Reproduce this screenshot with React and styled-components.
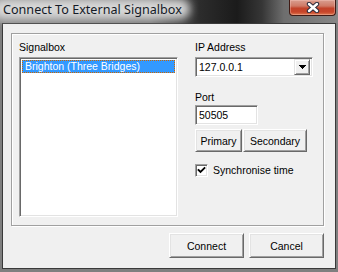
import styled, { createGlobalStyle } from "styled-components";

const GlobalStyle = createGlobalStyle`
  html, body {
    margin: 0;
    padding: 0;
    background: #7f7f7f;
  }
  * {
    box-sizing: border-box;
  }
`;

const Window = styled.div`
  width: 338px;
  height: 272px;
  display: flex;
  flex-direction: column;
  background: #7f7f7f;
  font-family: "Liberation Sans", Arial, sans-serif;
  font-size: 10.5px;
  color: #000;
`;

const TitleBar = styled.div`
  height: 23px;
  display: flex;
  align-items: flex-start;
  position: relative;
  z-index: 0;
  background: linear-gradient(
    90deg,
    #8c8c8c 0,
    #7a7a7a 150px,
    #2c2c2c 200px,
    #1b1b1b 237px,
    #363636 262px,
    #6e6e6e 284px,
    #878787 338px
  );
`;

const TitleText = styled.span`
  position: relative;
  margin: 1px 0 0 3px;
  font-family: "Noto Sans", "Open Sans", sans-serif;
  font-size: 12.6px;
  line-height: 17px;
  color: #141a26;
  white-space: nowrap;

  &::before {
    content: "";
    position: absolute;
    inset: -2px -8px -1px -10px;
    background: rgba(222, 222, 222, 0.92);
    border-radius: 9px;
    filter: blur(4px);
    z-index: -1;
  }
`;

const CloseButton = styled.div`
  margin-left: auto;
  margin-right: 2px;
  width: 47px;
  height: 16px;
  border: 1px solid #3f1a14;
  border-top: none;
  border-radius: 0 0 4px 4px;
  display: flex;
  align-items: center;
  justify-content: center;
  background: linear-gradient(
    180deg,
    #d99e90 0%,
    #cf7a66 40%,
    #c2432a 55%,
    #c8452a 80%,
    #de7b52 100%
  );
  box-shadow: inset 0 0 0 1px rgba(255, 210, 200, 0.35);
`;

const ClientWrap = styled.div`
  flex: 1;
  display: flex;
  padding: 0 2px 3px 2px;
`;

const Client = styled.div`
  flex: 1;
  border: 1px solid #3a3a3a;
  background: #f0f0f0;
  display: flex;
  flex-direction: column;
  padding: 9px 11px 10px 8px;
`;

const GroupBox = styled.div`
  height: 193px;
  border: 1px solid #a0a0a0;
  box-shadow: inset 1px 1px #fff, 1px 1px #fff;
  display: grid;
  grid-template-columns: 159px 118px;
  column-gap: 17px;
  padding: 7px 9px 8px 7px;
`;

const Column = styled.div`
  display: flex;
  flex-direction: column;
  align-items: flex-start;
`;

const Label = styled.div`
  line-height: 13px;
  height: 13px;
  margin-top: ${(p) => p.$top || 0}px;
  margin-bottom: ${(p) => p.$bottom || 0}px;
  white-space: nowrap;
`;

const Sunken = styled.div`
  border: 1px solid;
  border-color: #a0a0a0 #fff #fff #a0a0a0;
  box-shadow: inset 1px 1px #696969, inset -1px -1px #e3e3e3;
  background: #fff;
`;

const ListBox = styled(Sunken)`
  width: 159px;
  height: 160px;
  padding: 2px;
`;

const ListItem = styled.div`
  height: 13px;
  line-height: 13px;
  padding-left: 3px;
  background: ${(p) => (p.$selected ? "#3399ff" : "transparent")};
  color: ${(p) => (p.$selected ? "#fff" : "#000")};
  outline: ${(p) => (p.$selected ? "1px dotted #cc6600" : "none")};
  outline-offset: -1px;
  white-space: nowrap;
`;

const Combo = styled(Sunken)`
  width: 118px;
  height: 20px;
  display: flex;
  align-items: center;
  padding: 2px 2px 2px 3px;
`;

const ComboValue = styled.span`
  flex: 1;
  line-height: 16px;
`;

const DropButton = styled.div`
  width: 16px;
  height: 16px;
  background: #f0f0f0;
  border: 1px solid;
  border-color: #e3e3e3 #696969 #696969 #e3e3e3;
  box-shadow: inset 1px 1px #fff, inset -1px -1px #a0a0a0;
  display: flex;
  align-items: center;
  justify-content: center;
`;

const TextInput = styled(Sunken)`
  width: 63px;
  height: 20px;
  margin-top: 1px;
  padding: 2px 3px;
  line-height: 15px;
`;

const ButtonRow = styled.div`
  display: flex;
  gap: ${(p) => p.$gap || 0}px;
  margin-top: ${(p) => p.$top || 0}px;
  justify-content: ${(p) => p.$justify || "flex-start"};
`;

const Button = styled.div`
  width: ${(p) => p.$w}px;
  height: ${(p) => p.$h}px;
  background: #f0f0f0;
  border: 1px solid;
  border-color: #fff #696969 #696969 #fff;
  box-shadow: inset 1px 1px #e3e3e3, inset -1px -1px #a0a0a0;
  display: flex;
  align-items: center;
  justify-content: center;
  white-space: nowrap;
`;

const CheckRow = styled.label`
  display: flex;
  align-items: center;
  gap: 5px;
  margin-top: 12px;
  line-height: 13px;
`;

const CheckBox = styled(Sunken)`
  width: 13px;
  height: 13px;
  display: flex;
  align-items: center;
  justify-content: center;
`;

function App() {
  return (
    <>
      <GlobalStyle />
      <Window>
        <TitleBar>
          <TitleText>Connect To External Signalbox</TitleText>
          <CloseButton>
            <svg width="14" height="11" viewBox="0 0 14 11">
              <path
                d="M3 2 L11 9 M11 2 L3 9"
                stroke="#2c2c3c"
                strokeWidth="4.4"
                strokeLinecap="round"
              />
              <path
                d="M3 2 L11 9 M11 2 L3 9"
                stroke="#fff"
                strokeWidth="2.4"
                strokeLinecap="round"
              />
            </svg>
          </CloseButton>
        </TitleBar>
        <ClientWrap>
          <Client>
            <GroupBox>
              <Column>
                <Label $bottom={3}>Signalbox</Label>
                <ListBox>
                  <ListItem $selected>Brighton (Three Bridges)</ListItem>
                </ListBox>
              </Column>
              <Column>
                <Label $bottom={3}>IP Address</Label>
                <Combo>
                  <ComboValue>127.0.0.1</ComboValue>
                  <DropButton>
                    <svg width="7" height="4" viewBox="0 0 7 4" shapeRendering="crispEdges">
                      <polygon points="0,0 7,0 3.5,4" fill="#000" />
                    </svg>
                  </DropButton>
                </Combo>
                <Label $top={14}>Port</Label>
                <TextInput>50505</TextInput>
                <ButtonRow $gap={1} $top={4}>
                  <Button $w={47} $h={23}>Primary</Button>
                  <Button $w={64} $h={23}>Secondary</Button>
                </ButtonRow>
                <CheckRow>
                  <CheckBox>
                    <svg width="9" height="9" viewBox="0 0 9 9">
                      <path
                        d="M1.5 4 L3.5 6 L7.5 2"
                        stroke="#000"
                        strokeWidth="1.8"
                        fill="none"
                        strokeLinecap="square"
                      />
                    </svg>
                  </CheckBox>
                  Synchronise time
                </CheckRow>
              </Column>
            </GroupBox>
            <ButtonRow $gap={5} $top={7} $justify="flex-end">
              <Button $w={75} $h={25}>Connect</Button>
              <Button $w={75} $h={25}>Cancel</Button>
            </ButtonRow>
          </Client>
        </ClientWrap>
      </Window>
    </>
  );
}

export default App;
